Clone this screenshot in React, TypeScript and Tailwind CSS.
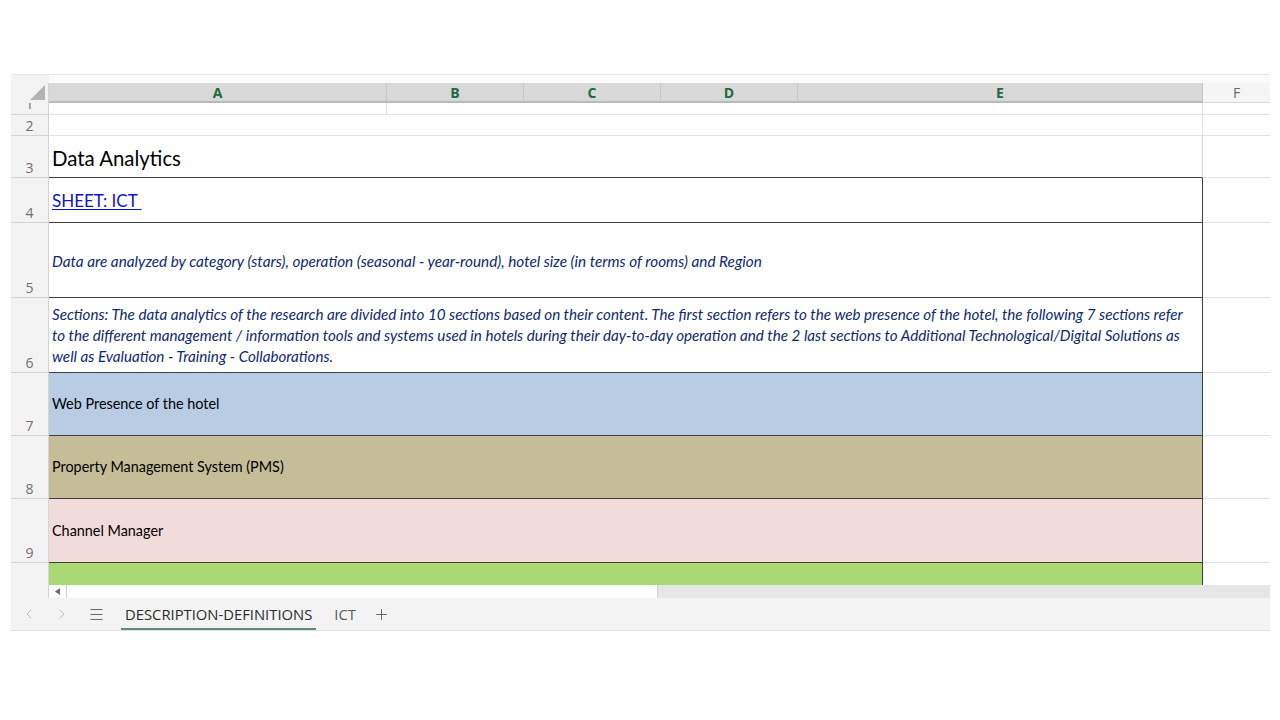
import { ChevronLeft, ChevronRight, Menu, Plus } from 'lucide-react'
import type { ReactNode } from 'react'

const cellFont = { fontFamily: 'Lato, "Noto Sans", sans-serif' }
const uiFont = { fontFamily: '"Open Sans", "Noto Sans", sans-serif' }

type RowProps = {
  n: string
  h: string
  cell: string
  children?: ReactNode
}

function RowHead({ n, clip }: { n: string; clip?: boolean }) {
  if (clip) {
    return (
      <div
        className="flex w-[38px] shrink-0 justify-center overflow-hidden border-r border-b border-[#d4d4d4] bg-[#f3f3f3] text-[14px] leading-none text-[#707070]"
        style={uiFont}
      >
        <span className="-mt-[6px]">{n}</span>
      </div>
    )
  }
  return (
    <div
      className="flex w-[38px] shrink-0 items-end justify-center border-r border-b border-[#d4d4d4] bg-[#f3f3f3] pb-[2px] text-[14px] leading-none text-[#707070]"
      style={uiFont}
    >
      {n}
    </div>
  )
}

function Row({ n, h, cell, children }: RowProps) {
  return (
    <div className={`flex ${h}`}>
      <RowHead n={n} />
      <div className={`flex w-[1154px] shrink-0 items-center pl-[3px] ${cell}`} style={cellFont}>
        {children}
      </div>
      <div className="flex-1 border-b border-[#e1e1e1] bg-white" />
    </div>
  )
}

const colHeads = [
  { l: 'A', w: 'w-[338px]' },
  { l: 'B', w: 'w-[137px]' },
  { l: 'C', w: 'w-[137px]' },
  { l: 'D', w: 'w-[137px]' },
  { l: 'E', w: 'w-[405px]' },
]

export default function App() {
  return (
    <div className="h-[720px] w-[1280px] overflow-hidden bg-white">
      <div className="ml-[11px] w-[1259px] pt-[74px]">
        {/* strip above the headers */}
        <div className="flex h-[9px] border-t border-[#e6e6e6]">
          <div className="w-[38px] bg-[#f3f3f3]" />
          <div className="flex-1 bg-[#fafafa]" />
        </div>

        {/* column headers */}
        <div className="flex h-[20px]" style={uiFont}>
          <div className="relative w-[38px] shrink-0 border-r border-[#d4d4d4] bg-[#f3f3f3]">
            <svg className="absolute right-[3px] bottom-[3px]" width="15" height="15" viewBox="0 0 15 15">
              <polygon points="15,0 15,15 0,15" fill="#b4b4b4" />
            </svg>
          </div>
          {colHeads.map((c) => (
            <div
              key={c.l}
              className={`flex ${c.w} shrink-0 items-center justify-center border-r border-b-2 border-r-[#c6c6c6] border-b-[#b9b9b9] bg-[#d8d8d8] text-[14px] font-bold text-[#1d6b3f]`}
            >
              {c.l}
            </div>
          ))}
          <div className="flex flex-1 items-center justify-center border-b border-[#dadada] bg-[#f5f5f5] text-[14px] text-[#6a6a6a]">
            F
          </div>
        </div>

        {/* row 1, partly scrolled away */}
        <div className="flex h-[12px]">
          <RowHead n="1" clip />
          <div className="w-[338px] shrink-0 border-r border-b border-[#e1e1e1]" />
          <div className="w-[816px] shrink-0 border-r border-b border-[#e1e1e1]" />
          <div className="flex-1 border-b border-[#e1e1e1]" />
        </div>

        <Row n="2" h="h-[21px]" cell="border-r border-b border-[#e1e1e1]" />

        <Row n="3" h="h-[42px]" cell="border-r border-b border-r-[#d6d6d6] border-b-[#404040] pt-[3px]">
          <span className="text-[20.4px] text-black">Data Analytics</span>
        </Row>

        <Row n="4" h="h-[45px]" cell="border-r border-b border-[#404040] pt-[1px]">
          <span className="text-[17px] text-[#1212cc] underline underline-offset-2">SHEET: ICT&nbsp;</span>
        </Row>

        <Row n="5" h="h-[75px]" cell="border-r border-b border-[#404040] pt-[3px]">
          <span className="text-[15.3px] text-[#0e2a6b] italic">
            Data are analyzed by category (stars), operation (seasonal - year-round), hotel size (in terms of rooms) and Region
          </span>
        </Row>

        <Row n="6" h="h-[75px]" cell="border-r border-b border-[#404040]">
          <div className="text-[15.2px] leading-[21px] whitespace-nowrap text-[#0e2a6b] italic">
            <div>
              Sections: The data analytics of the research are divided into 10 sections based on their content. The first section refers to the web presence of the hotel, the following 7 sections refer
            </div>
            <div>
              to the different management / information tools and systems used in hotels during their day-to-day operation and the 2 last sections to Additional Technological/Digital Solutions as
            </div>
            <div>well as Evaluation - Training - Collaborations.</div>
          </div>
        </Row>

        <Row n="7" h="h-[63px]" cell="border-r border-b border-[#404040] bg-[#b8cce4]">
          <span className="text-[14.4px] text-black">Web Presence of the hotel</span>
        </Row>

        <Row n="8" h="h-[63px]" cell="border-r border-b border-[#404040] bg-[#c4bd97]">
          <span className="text-[14.4px] text-black">Property Management System (PMS)</span>
        </Row>

        <Row n="9" h="h-[64px]" cell="border-r border-b border-[#404040] bg-[#f2dcdb]">
          <span className="text-[14.4px] text-black">Channel Manager</span>
        </Row>

        <div className="flex h-[22px]">
          <div className="w-[38px] shrink-0 border-r border-[#d4d4d4] bg-[#f3f3f3]" />
          <div className="w-[1154px] shrink-0 border-r border-[#404040] bg-[#aad872]" />
          <div className="flex-1 bg-white" />
        </div>

        {/* horizontal scrollbar */}
        <div className="flex h-[13px]">
          <div className="w-[38px] shrink-0 border-r border-[#d4d4d4] bg-[#f3f3f3]" />
          <div className="flex w-[608px] shrink-0 items-center bg-white">
            <div className="flex h-full w-[18px] items-center justify-center border-r border-[#cfcfcf]">
              <svg width="5" height="7" viewBox="0 0 5 7">
                <polygon points="5,0 5,7 0,3.5" fill="#6b6b6b" />
              </svg>
            </div>
          </div>
          <div className="flex-1 border-l border-[#d2d2d2] bg-[#e6e6e6]" />
        </div>

        {/* sheet tabs */}
        <div className="flex h-[33px] items-stretch border-b border-[#e2e2e2] bg-[#f3f3f3]" style={uiFont}>
          <div className="flex w-[34px] items-center justify-center pl-[2px] text-[#b3b3b3]">
            <ChevronLeft size={16} strokeWidth={1.25} />
          </div>
          <div className="flex w-[34px] items-center justify-center text-[#b3b3b3]">
            <ChevronRight size={16} strokeWidth={1.25} />
          </div>
          <div className="flex w-[34px] items-center justify-center text-[#555]">
            <Menu size={17} strokeWidth={1.25} />
          </div>
          <div className="ml-[8px] flex items-center border-b-2 border-[#5c8b83] px-[4px] pt-[2px] text-[14.8px] text-[#2d2d2d]">
            DESCRIPTION-DEFINITIONS
          </div>
          <div className="ml-[18px] flex items-center text-[14.8px] text-[#5a5a5a]">ICT</div>
          <div className="ml-[17px] flex items-center text-[#555]">
            <Plus size={17} strokeWidth={1.25} />
          </div>
          <div className="flex-1" />
        </div>
      </div>
    </div>
  )
}
